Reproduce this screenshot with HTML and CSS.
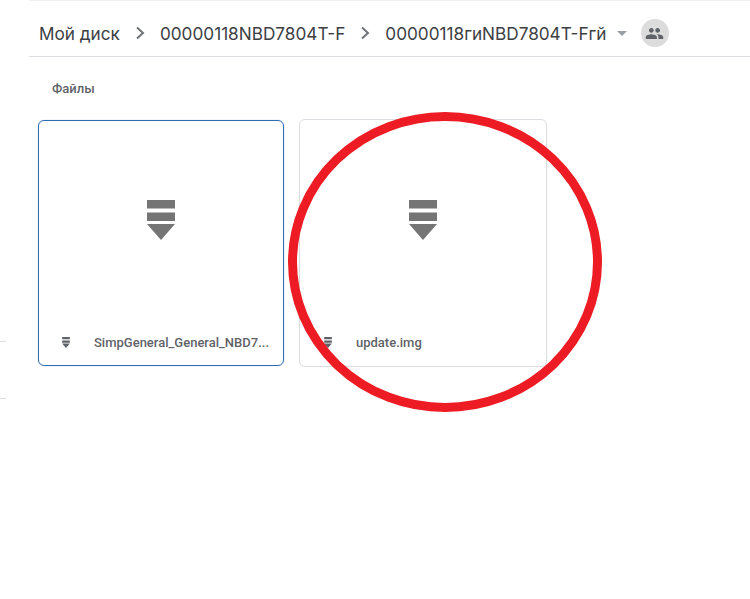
FILE: index.html
```html
<html>

<head>
  <meta charset="utf-8">
  <link rel="stylesheet" href="styles.css">
</head>

<body>
  <div class="page">
    <div class="side">
      <div class="tick tick-first"></div>
      <div class="tick tick-second"></div>
    </div>

    <div class="main">
      <div class="crumbs">
        <div class="crumb">Мой диск</div>
        <svg class="sep" viewBox="0 0 10 14"><path d="M2 1.500 L8 7 L2 12.500" /></svg>
        <div class="crumb">00000118NBD7804T-F</div>
        <svg class="sep" viewBox="0 0 10 14"><path d="M2 1.500 L8 7 L2 12.500" /></svg>
        <div class="crumb">00000118гиNBD7804T-Fгй</div>
        <div class="caret"></div>
        <div class="shared">
          <svg viewBox="0 0 24 24"><path d="M16 11c1.66 0 2.99-1.34 2.99-3S17.66 5 16 5s-3 1.34-3 3 1.34 3 3 3zm-8 0c1.66 0 2.99-1.34 2.99-3S9.66 5 8 5 5 6.34 5 8s1.34 3 3 3zm0 2c-2.33 0-7 1.17-7 3.5V19h14v-2.5c0-2.33-4.67-3.5-7-3.5zm8 0c-.29 0-.62.02-.97.05 1.16.84 1.97 1.97 1.97 3.45V19h6v-2.5c0-2.33-4.67-3.5-7-3.5z" /></svg>
        </div>
      </div>

      <div class="section-title">Файлы</div>

      <div class="files">
        <div class="card card-selected">
          <div class="preview">
            <svg class="big-icon" viewBox="0 0 28 40"><path d="M0 0h28v8.500H0zM0 12.500h28V21H0zM0 24h28L14 40z" /></svg>
          </div>
          <div class="card-foot">
            <svg class="small-icon" viewBox="0 0 28 40"><path d="M0 0h28v8.500H0zM0 12.500h28V21H0zM0 24h28L14 40z" /></svg>
            <div class="file-name">SimpGeneral_General_NBD7...</div>
          </div>
        </div>

        <div class="card">
          <div class="preview">
            <svg class="big-icon" viewBox="0 0 28 40"><path d="M0 0h28v8.500H0zM0 12.500h28V21H0zM0 24h28L14 40z" /></svg>
          </div>
          <div class="card-foot">
            <svg class="small-icon" viewBox="0 0 28 40"><path d="M0 0h28v8.500H0zM0 12.500h28V21H0zM0 24h28L14 40z" /></svg>
            <div class="file-name">update.img</div>
          </div>
        </div>
      </div>
    </div>
  </div>

  <!-- red marker drawn over the screenshot -->
  <svg class="marker" viewBox="0 0 750 599">
    <ellipse cx="445" cy="262" rx="152.500" ry="145.500" />
  </svg>
</body>

</html>
```

FILE: styles.css
```css
body {
  margin: 0;
  background: #fff;
  font-family: "Roboto", "Liberation Sans", sans-serif;
  color: #5f6368;
}

.page {
  display: flex;
  height: 599px;
  overflow: hidden;
}

.side {
  width: 29px;
  flex-shrink: 0;
}

.tick {
  width: 6px;
  height: 1px;
  background: #dadce0;
}

.tick-first {
  margin-top: 341px;
}

.tick-second {
  margin-top: 56px;
}

.main {
  flex: 1;
  border-top: 1px solid #f1f1f1;
}

.crumbs {
  display: flex;
  align-items: center;
  box-sizing: border-box;
  height: 56px;
  padding: 9px 0 0 10px;
  border-bottom: 1px solid #dadce0;
  color: #3c4043;
}

.crumb {
  font-family: "Inter", "Roboto", sans-serif;
  font-size: 17.200px;
  white-space: nowrap;
}

.sep {
  width: 10px;
  height: 14px;
  margin: 0 15px;
}

.sep path {
  fill: none;
  stroke: #6f7377;
  stroke-width: 2;
}

.caret {
  width: 0;
  height: 0;
  margin-left: 10px;
  border-left: 5px solid transparent;
  border-right: 5px solid transparent;
  border-top: 5px solid #9aa0a6;
}

.shared {
  display: flex;
  align-items: center;
  justify-content: center;
  width: 28px;
  height: 28px;
  margin-left: 14px;
  border-radius: 50%;
  background: #dcdcdc;
}

.shared svg {
  width: 19px;
  height: 19px;
  fill: #5f6368;
}

.section-title {
  margin: 24px 0 0 23px;
  height: 15px;
  font-size: 13px;
  line-height: 15px;
  font-weight: 500;
}

.files {
  display: flex;
  align-items: center;
  gap: 15px;
  margin: 23px 0 0 9px;
}

.card {
  display: flex;
  flex-direction: column;
  box-sizing: border-box;
  width: 248px;
  height: 248px;
  border: 1px solid #dadce0;
  border-radius: 6px;
}

.card-selected {
  width: 246px;
  height: 246px;
  border-color: #2f6cb0;
  box-shadow: 0 0 1px rgba(47, 108, 176, 0.5);
}

.preview {
  flex: 1;
  display: flex;
  align-items: center;
  justify-content: center;
}

.big-icon {
  width: 28px;
  height: 40px;
  fill: #757575;
}

.card-foot {
  display: flex;
  align-items: center;
  box-sizing: border-box;
  height: 46px;
  padding: 0 0 2px 24px;
}

.card-selected .card-foot {
  padding: 0 0 0 23px;
}

.small-icon {
  width: 8px;
  height: 11px;
  fill: #5f6368;
}

.file-name {
  margin-left: 24px;
  font-size: 13px;
  font-weight: 500;
  white-space: nowrap;
}

.marker {
  position: absolute;
  left: 0;
  top: 0;
  width: 750px;
  height: 599px;
  pointer-events: none;
}

.marker ellipse {
  fill: none;
  stroke: #ed1c24;
  stroke-width: 9;
}
```
